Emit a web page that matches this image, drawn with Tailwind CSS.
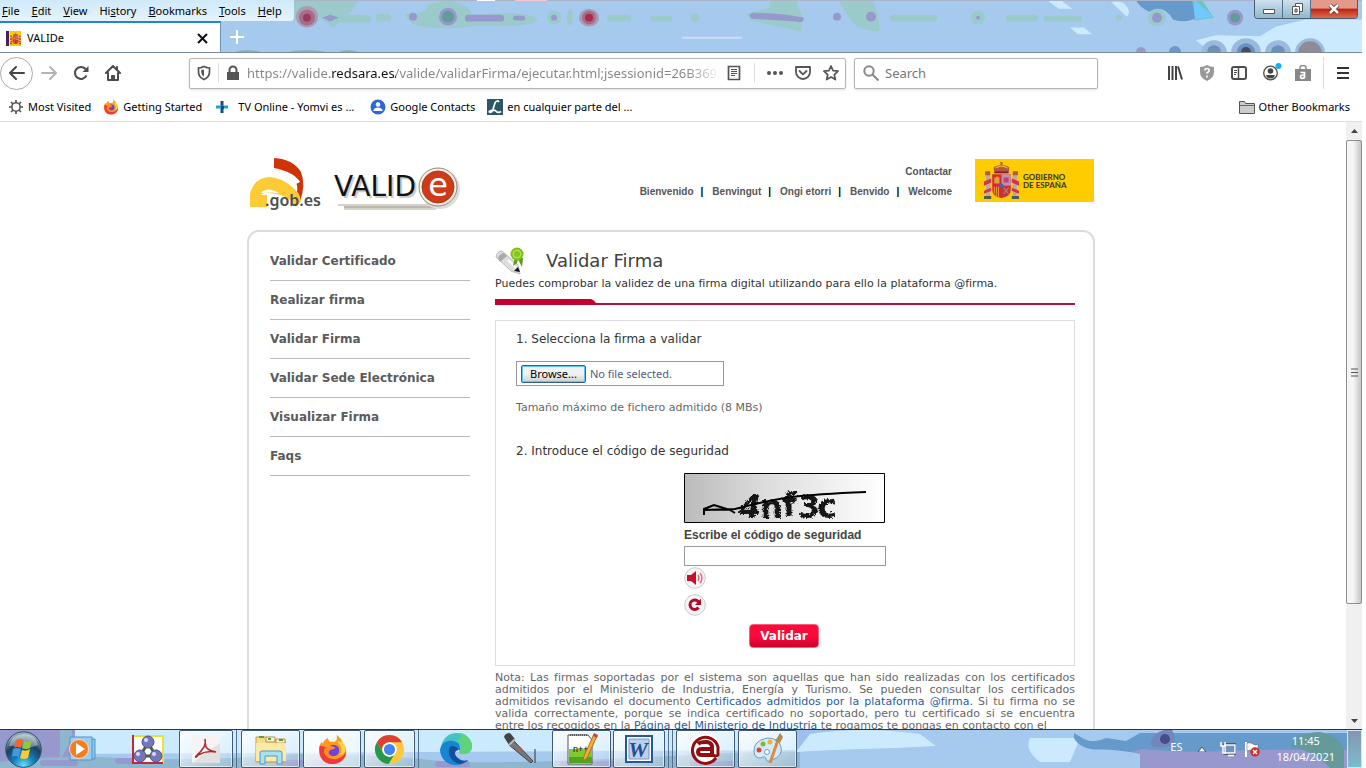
<!DOCTYPE html>
<html lang="es">
<head>
<meta charset="utf-8">
<title>VALIDe</title>
<script src="https://cdn.jsdelivr.net/npm/@tailwindcss/browser@4"></script>
</head>
<body class="h-screen overflow-hidden bg-white pr-1 font-['Noto_Sans',sans-serif] text-[11px] leading-4 text-black">
<svg class="hidden" aria-hidden="true">
  <defs>
    <symbol id="arms" viewBox="0 0 34 36">
      <g fill="#b5583c"><path d="M10 9q-2-4 2-5q5-2 10 0q4 1 2 5z"/><path d="M16 0h2v4h-2z"/></g>
      <path d="M10 9h14v2H10z" fill="#7f1d1d"/><path d="M11 6q6-4 12 0" stroke="#e8b84a" fill="none"/>
      <g fill="#b9a9a4"><path d="M2 12h4v22H2zM28 12h4v22h-4z"/></g>
      <path d="M0 33h7v3H0zM27 33h7v3h-7z" fill="#4d5a57"/>
      <path d="M1 9h5v4H1zM28 9h5v4h-5z" fill="#b5583c"/>
      <path d="M0 19l7-3v4l-7 3zM0 28l7-3v3l-7 3zM34 19l-7-3v4l7 3zM34 28l-7-3v3l7 3z" fill="#d6304a"/>
      <path d="M8 12h18v15q0 7-9 8q-9-1-9-8z" fill="#d6283c"/>
      <path d="M17 12h9v11h-9z" fill="#cc8bb0"/><path d="M19 15h5v5h-5z" fill="#b54a75"/>
      <path d="M10 15h2v-1h2v1h1v6h-5z" fill="#e0a032"/>
      <path d="M10 24v7M12 24v9M14 24v10" stroke="#e0a032"/>
      <path d="M18 24h7v4q-1 4-7 6z" fill="#a9404f"/><path d="M19 25l5 6m0-6l-5 6" stroke="#cc7b50"/>
      <circle cx="17" cy="23" r="2" fill="#4269a5"/>
    </symbol>
    <symbol id="firefox" viewBox="0 0 32 32">
      <path d="M20 1c5 3 6 6 7 9c2 1 4 6 3 11c-1 6-7 10-14 10C8 31 2 25 2 17c0-4 1-7 3-9l1 2c1-3 3-5 5-6l2 4h5c3-1 3-4 2-7z" fill="#ff9a1f"/>
      <path d="M3 12c-2 9 2 19 13 19c8 0 14-6 14-13c-4 9-17 11-22 3c-2-4 0-7 3-7c-4-1-6-2-8-2z" fill="#f5363c"/>
      <path d="M20 1c6 3 8 9 9 15c0-2-1-5-2-6C26 5 23 3 20 1zM21 8c5 5 6 10 2 14c5 0 7-4 6-9c-1-4-4-6-8-5z" fill="#ffd83b"/>
      <circle cx="17" cy="17" r="6" fill="#7542d6"/><path d="M10 13c4-2 6 0 9 1c-2 3-6 1-7 5c0 2 2 4 5 4c-5 1-8-2-8-5z" fill="#ff8c24"/>
    </symbol>
  </defs>
</svg>
<div class="flex h-full flex-col">

<!-- Menu bar and tab strip over the glass frame -->
<header class="relative isolate h-[53px] shrink-0 overflow-hidden border-b border-[#7d8c9c] bg-[#a6c9ee]">
  <svg class="absolute inset-0 -z-10 h-full w-full" viewBox="0 0 1362 53" preserveAspectRatio="none" aria-hidden="true">
    <g fill="#9bcaca">
      <path d="M289 0h70l-8 12l-17 16l-17-12l-10 6l-16-2z"/><path d="M405 14q20 2 24-10l20-4q26 8 22 16q50-6 67 3q-4 10-60 7q-40 6-60 0q-10-2-13-12z"/>
      <rect x="335" y="15" width="36" height="8" rx="4"/><rect x="376" y="14" width="15" height="8" rx="4"/><rect x="607" y="15" width="24" height="7" rx="3"/><rect x="650" y="16" width="22" height="6" rx="3"/><circle cx="554" cy="18" r="7"/><ellipse cx="570" cy="18" rx="3" ry="8"/><circle cx="695" cy="18" r="4"/>
      <path d="M746 14l24-6v-8h26l6 16q0 12-1 16l-50-11z"/><path d="M838 0h34q9 18 7 32q-20 0-29-12z"/><rect x="890" y="15" width="47" height="7" rx="3"/><circle cx="978" cy="18" r="7"/><rect x="1006" y="15" width="32" height="7" rx="3"/><rect x="1044" y="16" width="38" height="6" rx="3"/><circle cx="1119" cy="18" r="3"/>
    </g>
    <g fill="#9799ce"><rect x="465" y="15" width="39" height="7" rx="3"/><rect x="513" y="16" width="12" height="5" rx="2"/><circle cx="413" cy="17" r="4"/><circle cx="448" cy="17" r="9"/><circle cx="554" cy="18" r="3"/><path d="M752 13q30 0 52 5q0 6-8 4l-44-3q-5-3 0-6z"/><circle cx="837" cy="17" r="4"/><circle cx="871" cy="17" r="5"/><circle cx="978" cy="18" r="2"/><path d="M322 18l8-3l9 3l-9 4z"/><path d="M1137 0q8 6 10 0z"/></g>
    <circle cx="448" cy="17" r="6" fill="#639c98"/>
    <circle cx="307" cy="17" r="11" fill="#a99bb5"/><circle cx="307" cy="18" r="8" fill="#a86c87"/><circle cx="307" cy="18" r="4" fill="#963c62"/>
    <ellipse cx="589" cy="18" rx="10" ry="9" fill="#a99bb5"/><circle cx="589" cy="18" r="7" fill="#a86c87"/><circle cx="589" cy="18" r="4" fill="#a82a4c"/>
    <path d="M1048 1h14l10 8h-13zM1070 28h14l8 7h-14zM1111 2q12-2 16 5q4 6 0 10z" fill="#cbeafd"/>
    <path d="M1196 41l20-5l44 1l16-10l30-7h56v33H1210z" fill="#cbeafd"/>
    <path d="M1184 0h18l12 18l-19 3z" fill="#64c8c8"/><path d="M1195 0l18 17l-20 3z" fill="#72c9fb"/><path d="M1136 0h56q2 9 3 19q-12 5-22 1q-9-17-24-8q-10-5-13-12z" fill="#659acb"/>
    <circle cx="1157" cy="18" r="9" fill="#9bcaca"/><circle cx="1157" cy="18" r="5" fill="#9799ce"/>
    <circle cx="1235" cy="18" r="8" fill="#9799ce"/><circle cx="1235" cy="18" r="5" fill="#639c98"/>
    <g fill="#9bb8de"><circle cx="1214" cy="54" r="13"/><circle cx="1246" cy="54" r="15"/><circle cx="1278" cy="54" r="13"/><circle cx="1310" cy="54" r="15"/></g>
    <g fill="#6a91bb"><circle cx="1214" cy="53" r="7"/><circle cx="1246" cy="53" r="9"/><circle cx="1278" cy="53" r="7"/></g><circle cx="1246" cy="53" r="5" fill="#474c60"/><circle cx="1310" cy="54" r="12" fill="#8e8d96"/><circle cx="1141" cy="53" r="5" fill="#9799ce"/><circle cx="1175" cy="53" r="6" fill="#6b9ac8"/>
    <path d="M682 38.500h60" stroke="#cfdcfb" stroke-width="2"/>
    <path d="M0 .5h1362" stroke="#aab4c7"/><path d="M477 .5h18m20 0h32" stroke="#fff"/><path d="M515 .5h32" stroke="#f1c4c8"/>
    <path d="M235 53q12-4 26 0m26 0q20-4 40 0m12 0q8-4 20 0" fill="#86b6b9"/>
  </svg>
  <nav class="flex h-[21px] w-[294px] items-center gap-3 rounded-br bg-linear-to-b from-[#cfe9fa] to-[#e6f3fb] pl-0.5" aria-label="Menu">
    <button><u>F</u>ile</button><button><u>E</u>dit</button><button><u>V</u>iew</button><button>Hi<u>s</u>tory</button><button><u>B</u>ookmarks</button><button><u>T</u>ools</button><button><u>H</u>elp</button>
  </nav>
  <div class="flex h-8">
    <div class="flex w-[221px] items-center border-t-2 border-r border-t-[#1f86c7] border-r-[#6d93b4] bg-white pl-1.5">
      <svg class="mr-1.5 size-[15px]" viewBox="0 0 15 15"><path fill="#fc0" d="M0 0h15v15H0z"/><path fill="#43235f" d="M0 0h3v15H0z"/><path fill="#f7e9a9" d="M3 0h1v15H3z"/><use href="#arms" x="4" y="1" width="11" height="13"/></svg>
      <span class="grow">VALIDe</span>
      <button class="mr-3" aria-label="Close tab"><svg class="size-[11px]" viewBox="0 0 11 11"><path d="M1 1l9 9m0-9l-9 9" stroke="#111" stroke-width="2"/></svg></button>
    </div>
    <button class="ml-2" aria-label="New tab"><svg class="size-4" viewBox="0 0 16 16"><path d="M8 1v14M1 8h14" stroke="#fff" stroke-width="2"/></svg></button>
  </div>
  <div class="absolute top-0 right-1 flex h-[19px] overflow-hidden rounded-b border border-t-0 border-[#4d5e72]">
    <button class="grid w-7 place-items-center border-r border-[#59708a] bg-linear-to-b from-[#cfe0ef] to-[#8eb9cc]" aria-label="Minimize"><svg class="size-[14px]" viewBox="0 0 14 14"><path d="M1.500 7.500h11v4h-11z" fill="#fff" stroke="#555"/></svg></button>
    <button class="grid w-7 place-items-center border-r border-[#59708a] bg-linear-to-b from-[#cfe0ef] to-[#8eb9cc]" aria-label="Restore"><svg class="size-[14px]" viewBox="0 0 14 14"><path d="M5.500 1.500h7v8h-7z" fill="#fff" stroke="#555"/><path d="M2.500 4.500h7v8h-7z" fill="#fff" stroke="#555"/><path d="M5 7h2v3H5z" fill="#b7c8e0" stroke="#555"/></svg></button>
    <button class="grid w-[46px] place-items-center bg-linear-to-b from-[#e49a8a] from-45% via-[#bd1c12] via-50% to-[#e06a4a]" aria-label="Close"><svg class="size-[12px]" viewBox="0 0 12 12"><path d="M2 2l8 8m0-8l-8 8" stroke="#5b3030" stroke-width="4"/><path d="M2 2l8 8m0-8l-8 8" stroke="#fff" stroke-width="2.500"/></svg></button>
  </div>
</header>

<!-- Navigation toolbar -->
<div class="flex h-10 shrink-0 items-center text-[#555]">
  <div class="flex w-[189px] items-center">
    <button class="grid size-[33px] place-items-center rounded-full border border-[#aaa]" aria-label="Back"><svg class="size-4" viewBox="0 0 16 16" fill="none" stroke="#444" stroke-width="2" stroke-linecap="round" stroke-linejoin="round"><path d="M15 8H1m6-6L1 8l6 6"/></svg></button>
    <button class="ml-2" aria-label="Forward"><svg class="size-4" viewBox="0 0 16 16" fill="none" stroke="#b4b4b4" stroke-width="2" stroke-linecap="round" stroke-linejoin="round"><path d="M1 8h14M9 2l6 6l-6 6"/></svg></button>
    <button class="ml-4" aria-label="Reload"><svg class="size-4" viewBox="0 0 16 16"><path d="M13.400 10.500A6 6 0 1 1 12.500 4" fill="none" stroke="#4c4c4c" stroke-width="2"/><path d="M15.500 1v6H9.500z" fill="#4c4c4c"/></svg></button>
    <button class="ml-4" aria-label="Home"><svg class="size-4" viewBox="0 0 16 16" fill="none" stroke="#4c4c4c" stroke-width="2" stroke-linejoin="round" stroke-linecap="round"><path d="M1 8l7-7l7 7M3 8v7h10V8"/><path d="M7 15v-4h2v4M12 2v2"/></svg></button>
  </div>
  <div class="flex h-[31px] w-[657px] items-center rounded-xs border border-[#b5b5b5] bg-white px-1.5 shadow">
    <svg class="size-4 shrink-0" viewBox="0 0 16 16"><path d="M8 1.500q3 1.500 5.500 1.500v4q0 5-5.500 7.500Q2.500 12 2.500 7V3Q5 3 8 1.500z" fill="none" stroke="#555" stroke-width="1.700"/><path d="M8 4.500v7Q5.200 10 5.200 7V5z" fill="#555"/></svg>
    <span class="mx-1.5 h-5 w-px bg-[#ddd]"></span>
    <svg class="size-4 shrink-0" viewBox="0 0 16 16"><path d="M2 7h12v8H2z" fill="#555"/><path d="M4.500 8V5a3.500 3.500 0 0 1 7 0v3" fill="none" stroke="#555" stroke-width="2"/></svg>
    <input aria-label="Address" class="mx-1.5 min-w-0 grow bg-[linear-gradient(90deg,#848484_83px,#111_83px,#111_149px,#848484_149px,#848484_440px,#ffffff_474px)] bg-clip-text font-['Noto_Sans',sans-serif] text-[13px] text-transparent outline-none" value="https://valide.redsara.es/valide/validarFirma/ejecutar.html;jsessionid=26B3695F">
    <button aria-label="Reader view"><svg class="size-4" viewBox="0 0 16 16" fill="none" stroke="#555"><path d="M2.500 1.500h11v13h-11z" stroke-width="1.700"/><path d="M5 4.500h6M5 6.500h6M5 8.500h6M5 10.500h4"/></svg></button>
    <span class="mx-3 h-5 w-px bg-[#ddd]"></span>
    <button aria-label="Page actions"><svg class="size-4" viewBox="0 0 16 16" fill="#555"><circle cx="2" cy="8" r="2"/><circle cx="8" cy="8" r="2"/><circle cx="14" cy="8" r="2"/></svg></button>
    <button class="ml-3" aria-label="Save to Pocket"><svg class="size-4" viewBox="0 0 16 16" fill="none" stroke="#555" stroke-width="1.800" stroke-linejoin="round" stroke-linecap="round"><path d="M1 2h14v5a7 7 0 0 1-14 0z"/><path d="M4.500 6L8 9.300L11.500 6"/></svg></button>
    <button class="ml-3" aria-label="Bookmark"><svg class="size-4" viewBox="0 0 16 16" fill="none" stroke="#555" stroke-width="1.700" stroke-linejoin="round"><path d="M8 1l2.100 4.700l5 .5l-3.800 3.400l1.100 5L8 12l-4.400 2.600l1.100-5L.9 6.200l5-.5z"/></svg></button>
  </div>
  <div class="ml-2 flex h-[31px] w-[244px] items-center rounded-xs border border-[#b5b5b5] bg-white px-2 shadow">
    <svg class="size-4 shrink-0" viewBox="0 0 16 16" fill="none" stroke="#888" stroke-width="2"><circle cx="6" cy="6" r="4.700"/><path d="M9.500 9.500l6 6"/></svg>
    <input aria-label="Search" placeholder="Search" class="ml-1.5 min-w-0 grow text-[13px] outline-none placeholder:text-[#777]">
  </div>
  <div class="ml-auto flex h-full items-center gap-4">
    <button aria-label="Library"><svg class="size-4" viewBox="0 0 16 16" stroke="#444" stroke-width="2"><path d="M2 1v14M5.500 1v14M9 1v14M11 1.500l4 13"/></svg></button>
    <button aria-label="Tracker status"><svg class="size-4" viewBox="0 0 16 16"><path d="M8 0q3 2 7 2v5q0 6-7 9q-7-3-7-9V2q4 0 7-2z" fill="#999"/><path d="M5.800 5.500q.2-2 2.200-2t2.200 1.800q0 1.300-1.200 1.800t-1 1.600M8 10.500v2" fill="none" stroke="#fff" stroke-width="1.700"/></svg></button>
    <button aria-label="Sidebars"><svg class="size-4" viewBox="0 0 16 16" fill="none" stroke="#4c4c4c"><rect x="1" y="2" width="14" height="12" rx="2" stroke-width="2"/><path d="M7.500 2v12" stroke-width="1.500"/><path d="M3 5.500h3M3 7.500h3M3 9.500h2"/></svg></button>
    <button aria-label="Account"><svg class="size-4 overflow-visible" viewBox="0 0 16 16"><circle cx="7.500" cy="8" r="6.800" fill="none" stroke="#4c4c4c" stroke-width="1.300"/><circle cx="7.500" cy="6" r="2.800" fill="#444"/><path d="M3 10h9q-1 3.500-4.500 3.500T3 10z" fill="#444"/><circle cx="15.500" cy="1" r="3" fill="#14aef2"/></svg></button>
    <button aria-label="Addon"><svg class="size-4" viewBox="0 0 16 16"><path d="M0 4h16v12H0z" fill="#888"/><path d="M5 5V2.500q0-2 3-2t3 2V5" fill="none" stroke="#888" stroke-width="1.500"/><path d="M5.500 7.500h4v6m0-3.500h-2q-2 0-2 1.700T7.200 13.300q2.300 0 2.300-2" fill="none" stroke="#fff" stroke-width="1.700"/></svg></button>
    <span class="-mx-1 h-8 w-px bg-[#ddd]"></span>
    <button class="mr-3" aria-label="Open menu"><svg class="size-[14px]" viewBox="0 0 14 14" stroke="#333" stroke-width="2"><path d="M1 2h12M1 7h12M1 12h12"/></svg></button>
  </div>
</div>

<!-- Bookmarks -->
<nav class="flex h-[29px] shrink-0 items-center gap-3 border-b border-[#ddd] px-2" aria-label="Bookmarks">
  <a href="#" class="flex items-center gap-1"><svg class="size-4" viewBox="0 0 16 16" fill="none" stroke="#555"><circle cx="8" cy="8" r="4.200" stroke-width="1.600"/><path d="M8 1v2.500M8 12.500V15M1 8h2.500M12.500 8H15M3 3l2 2M11 11l2 2M13 3l-2 2M5 11l-2 2" stroke-width="1.700"/></svg>Most Visited</a>
  <a href="#" class="flex items-center gap-1"><svg class="size-4"><use href="#firefox"/></svg>Getting Started</a>
  <a href="#" class="flex items-center gap-2"><svg class="size-4" viewBox="0 0 16 16"><path d="M8 2v12" stroke="#164e83" stroke-width="3"/><path d="M2 8h12" stroke="#20a3d0" stroke-width="3"/><path d="M7 7h3v3H7z" fill="#164e83"/></svg>TV Online - Yomvi es ...</a>
  <a href="#" class="ml-1 flex items-center gap-1"><svg class="size-4" viewBox="0 0 16 16"><circle cx="8" cy="8" r="7.500" fill="#2b67dd"/><circle cx="8" cy="5.500" r="2.300" fill="#fff"/><path d="M3.500 11q1-2.500 4.500-2.500t4.500 2.500v1h-9z" fill="#fff"/></svg>Google Contacts</a>
  <a href="#" class="flex items-center gap-1"><svg class="size-4" viewBox="0 0 16 16"><path d="M0 0h16v16H0z" fill="#2b5866"/><path d="M12 3q-2-2.500-4 1q-1 3-2 6.500q-1 3-3 3q-2-1 1-2q4-1 6 1.500q2 1 4-.5" fill="none" stroke="#fff" stroke-width="1.700"/></svg>en cualquier parte del ...</a>
  <a href="#" class="mr-1 ml-auto flex items-center gap-1"><svg class="size-4" viewBox="0 0 16 16"><path d="M.5 14.500v-12h5l1 2h9v10z" fill="#ccc" stroke="#555"/><path d="M.5 6.500h15" stroke="#666"/></svg>Other Bookmarks</a>
</nav>

<!-- Page -->
<div class="flex min-h-0 grow">
  <main class="h-full min-w-0 grow overflow-hidden bg-white pr-1 font-['DejaVu_Sans',sans-serif]">
    <div class="mx-auto w-full max-w-[848px]">
      <div class="flex items-start pt-9 pl-[3px]">
        <svg class="h-[54px] w-[72px]" viewBox="0 0 72 54" role="img" aria-label=".gob.es">
          <path d="M24 0q19 1 27 14q5 12-1 30q-4 4-5 2q4-17 1-21Q38 14 24 11z" fill="#cf3408"/>
          <path d="M24 11q13 3 22 15l4-2q-6-10-26-14z" fill="#fff"/>
          <path d="M0 49V36Q4 20 19 19q17 1 30 17l2 7l-5 6Q40 37 20 35q-6-1-9 2h6v12z" fill="#fdcb35"/>
          <path d="M11 35q6-7 18 0q-10-1-18 0z" fill="#fff"/>
          <text x="15" y="48" font-family="Noto Sans, sans-serif" font-size="16" font-weight="600" fill="#4d4d4d">.gob.es</text>
        </svg>
        <svg class="mt-1 ml-3 h-[52px] w-[126px]" viewBox="0 0 126 52" role="img" aria-label="VALIDe">
          <g font-family="DejaVu Sans, sans-serif" font-size="28"><text x="2" y="36" fill="#ccc">VALID</text><text x="0" y="34" fill="#111">VALID</text></g>
          <path d="M4 43h92M10 47h92" stroke="#c9c4b4" stroke-width="1.500"/><path d="M10 45h92" stroke="#7d7364"/>
          <circle cx="106" cy="27" r="20" fill="#ddd"/><circle cx="104" cy="25" r="19" fill="#f6f2ea" stroke="#9b8170"/><circle cx="104" cy="25" r="16" fill="#cf3a17" stroke="#a83a20"/>
          <text x="104" y="34" text-anchor="middle" font-family="DejaVu Sans, sans-serif" font-size="32" fill="#fff">e</text>
        </svg>
        <div class="mt-1.5 ml-auto flex flex-col items-end gap-1 font-['Liberation_Sans',sans-serif] text-[10px] font-bold text-[#555]">
          <a href="#">Contactar</a>
          <div class="flex gap-[7px]"><a href="#">Bienvenido</a><span class="mr-0.5 text-black">|</span><a href="#">Benvingut</a><span class="mr-0.5 text-black">|</span><a href="#">Ongi etorri</a><span class="mr-0.5 text-black">|</span><a href="#">Benvido</a><span class="mr-0.5 text-black">|</span><a href="#">Welcome</a></div>
        </div>
        <div class="mt-px mr-px ml-[23px] flex h-[43px] w-[119px] items-center gap-1 bg-[#fc0] pl-[9px] font-['Lato',sans-serif] text-[8px] leading-2 font-bold text-[#333]">
          <svg class="h-[37px] w-[35px]"><use href="#arms"/></svg><span>GOBIERNO<br>DE ESPAÑA</span>
        </div>
      </div>
      <div class="mt-4 flex h-[600px] rounded-t-xl border-2 border-[#dcdcdc] px-[21px] pt-[9px]">
        <nav class="w-[200px] shrink-0 text-[12px] font-bold text-[#5b5b5b]" aria-label="Principal">
          <a href="#" class="block h-10 border-b border-[#bbb] pt-3">Validar Certificado</a>
          <a href="#" class="block h-[39px] border-b border-[#bbb] pt-[11px]">Realizar firma</a>
          <a href="#" class="block h-[39px] border-b border-[#bbb] pt-[11px]">Validar Firma</a>
          <a href="#" class="block h-[39px] border-b border-[#bbb] pt-[11px]">Validar Sede Electrónica</a>
          <a href="#" class="block h-[39px] border-b border-[#bbb] pt-[11px]">Visualizar Firma</a>
          <a href="#" class="block h-[39px] border-b border-[#bbb] pt-[11px]">Faqs</a>
        </nav>
        <section class="ml-[25px] w-[580px] shrink-0 text-[#333]">
          <div class="flex h-8 items-center pt-2">
            <svg class="h-7 w-8" viewBox="0 0 32 28"><path d="M1 10q1-6 6-6l16 14l2 9l-9-3z" fill="#dedede" stroke="#bbb"/><path d="M3 11q2-5 6-5l3 3l-7 6z" fill="#aaa"/><path d="M13 13l8 8" stroke="#fff" stroke-width="2"/><path d="M25 25l-6-1l4-4z" fill="#111"/><path d="M20 10l-2 9l4-3l1-4l4 8l1-9z" fill="#569a1b"/><circle cx="22" cy="7" r="6.500" fill="#7ebf16"/><circle cx="22" cy="7" r="4.500" fill="#b2de48"/><circle cx="22" cy="7" r="3" fill="#83c41d"/></svg>
            <h1 class="ml-[19px] text-[18px] leading-6 text-[#404040]">Validar Firma</h1>
          </div>
          <p class="pt-[3px] text-[11px]">Puedes comprobar la validez de una firma digital utilizando para ello la plataforma @firma.</p>
          <svg class="mt-[7px] h-1.5 w-full" aria-hidden="true"><path d="M0 4h580v2H0z" fill="#b01238"/><path d="M0 0h96q3 1 5 4v2H0z" fill="#c3002f"/></svg>
          <form class="mt-[15px] h-[346px] border border-[#ddd] px-5 pt-2.5">
            <p class="text-[12px]">1. Selecciona la firma a validar</p>
            <div class="mt-3.5 flex h-[25px] w-[208px] items-center border border-[#999] pl-1 font-['Noto_Sans',sans-serif] text-[11px]">
              <input id="firma" type="file" class="sr-only">
              <label for="firma" class="rounded-xs border border-[#2d628c] bg-linear-to-b from-[#f2f2f2] from-50% to-[#cfcfcf] px-2 text-black inset-ring inset-ring-[#5fc6f5]">Browse...</label>
              <span class="ml-1 text-[#4f5b80]">No file selected.</span>
            </div>
            <p class="mt-3.5 text-[11px] text-[#666]">Tamaño máximo de fichero admitido (8 MBs)</p>
            <p class="mt-[27px] text-[12px]">2. Introduce el código de seguridad</p>
            <div class="mt-3.5 ml-[168px] flex w-[202px] flex-col items-start">
              <svg class="h-[50px] w-[201px]" viewBox="0 0 201 50" role="img" aria-label="Captcha">
                <defs><linearGradient id="cg"><stop stop-color="#bbb"/><stop offset=".4" stop-color="#dcdcdc"/><stop offset="1" stop-color="#fff"/></linearGradient>
                <filter id="rough"><feTurbulence baseFrequency=".35" numOctaves="2" seed="4"/><feDisplacementMap in="SourceGraphic" scale="4"/></filter></defs>
                <path d="M.5 .5h200v49H.5z" fill="url(#cg)" stroke="#000"/>
                <g filter="url(#rough)" font-family="DejaVu Sans, sans-serif" font-weight="bold" fill="#151515"><text x="54" y="44" font-size="32" font-style="italic">4</text><text x="75" y="44" font-size="32">n</text><text x="97" y="43" font-size="34">f</text><text x="113" y="44" font-size="32">3</text><text x="132" y="44" font-size="34">c</text></g>
                <path d="M20 42v-6l10-4l16 5l5 3M20 37l31-1q34-9 57-12t74-5" fill="none" stroke="#000" stroke-width="2"/>
              </svg>
              <label for="codigo" class="mt-1 font-['Liberation_Sans',sans-serif] text-[12px] font-bold text-[#444]">Escribe el código de seguridad</label>
              <input id="codigo" type="text" class="mt-[3px] h-5 w-full border border-[#999] bg-white px-1">
              <button type="button" class="mt-px" aria-label="Escuchar código"><svg class="size-[22px]" viewBox="0 0 22 22"><circle cx="11" cy="11" r="10.300" fill="#f4f4f4" stroke="#ccc"/><path d="M3 8h4l5-4v14l-5-4H3z" fill="#c8102e"/><path d="M14 8q2 3 0 6M16 6q4 5 0 10" fill="none" stroke="#d86a7c" stroke-width="1.400"/></svg></button>
              <button type="button" class="mt-[5px]" aria-label="Recargar código"><svg class="size-[22px]" viewBox="0 0 22 22"><circle cx="11" cy="11" r="10.300" fill="#f4f4f4" stroke="#ccc"/><path d="M14.500 13.500A4.700 4.700 0 1 1 14.500 8" fill="none" stroke="#b30a2c" stroke-width="3"/><path d="M17 4.500v6.500h-6z" fill="#b30a2c"/></svg></button>
            </div>
            <button type="button" class="mt-2 ml-[233px] block h-6 w-[70px] rounded border border-[#fa5c7c] bg-linear-to-b from-[#fb0b39] from-50% to-[#cc0231] text-[12px] font-bold text-white">Validar</button>
          </form>
          <p class="mt-1.5 text-justify text-[11px] leading-3 text-[#666]">Nota: Las firmas soportadas por el sistema son aquellas que han sido realizadas con los certificados admitidos por el Ministerio de Industria, Energía y Turismo. Se pueden consultar los certificados admitidos revisando el documento <a href="#" class="text-[#2c5a9a]">Certificados admitidos por la plataforma @firma.</a> Si tu firma no se valida correctamente, porque se indica certificado no soportado, pero tu certificado si se encuentra entre los recogidos en la <a href="#" class="text-[#2c5a9a]">Página del Ministerio de Industria</a> te rogamos te pongas en contacto con el</p>
        </section>
      </div>
    </div>
  </main>
  <div class="flex w-4 shrink-0 flex-col bg-[#f0f0f0]" aria-hidden="true">
    <div class="grid h-[18px] place-items-center"><svg class="h-1 w-[7px]" viewBox="0 0 7 4"><path d="M0 4l3.500-4L7 4z" fill="#444"/></svg></div>
    <div class="grid h-[464px] place-items-center rounded-xs border border-[#8f8f8f] bg-linear-to-r from-[#f5f5f5] from-45% to-[#c6c6c6]"><svg class="h-[9px] w-[7px]" viewBox="0 0 7 9"><path d="M0 1h7M0 4.500h7M0 8h7" stroke="#555"/></svg></div>
    <div class="mt-auto grid h-[17px] place-items-center"><svg class="h-1 w-[7px]" viewBox="0 0 7 4"><path d="M0 0l3.500 4L7 0z" fill="#444"/></svg></div>
  </div>
</div>

<!-- Taskbar -->
<footer class="relative isolate flex h-[39px] shrink-0 items-stretch overflow-hidden border-t border-[#27364a] bg-[#a6c9ee]">
  <svg class="absolute inset-0 -z-10 h-full w-full" viewBox="0 0 1362 38" preserveAspectRatio="none" aria-hidden="true">
    <path d="M60 0h780l-30 4H980l40 5h60v29H60z" fill="#a6c9ee"/><path d="M70 0h740v20L60 24z" fill="#cbeafd"/>
    <path d="M0 0h75v20l-15 18H0z" fill="#9799ce"/><path d="M60 0h12v8l-12 22zM0 32q60-8 120-4t180-4q80 0 130 6t240-4t140 4v8H0z" fill="#8fb6cf"/>
    <g fill="#9799ce"><rect x="40" y="30" width="38" height="6" rx="3"/><rect x="115" y="28" width="30" height="6" rx="3"/><rect x="280" y="30" width="50" height="6" rx="3"/><rect x="435" y="31" width="35" height="6" rx="3"/><rect x="560" y="31" width="60" height="5" rx="2"/><rect x="690" y="31" width="44" height="5" rx="2"/></g>
    <path d="M796 0h74l-8 14l-66 6z" fill="#9fc0ea"/>
    <path d="M810 4q50-8 110 0l16 12l-60 3l-80 3z" fill="#cbeafd"/><path d="M800 22q80-6 140-2t134-3v21H800z" fill="#a6c9ee"/><path d="M1030 8h50l-10 24h-30q-16-12-10-24z" fill="#cbeafd"/>
    <path d="M1074 3l10 6q10 5 22-1l20 3l14-8h222v35h-150q-60-14-110-18q-22 0-28-12z" fill="#659acb"/>
    <path d="M1074 32q14-12 34-10t34-3q40 4 80 2t140-1v18H1074z" fill="#9799ce"/><path d="M1074 22q30-6 66 2v14h-66z" fill="#a6c9ee"/>
    <path d="M1150 14q4-12 14-14h8q6 10-2 16q-14 4-20-2z" fill="#7486bd"/><circle cx="1165" cy="9" r="5" fill="#454f87"/>
    <path d="M1290 16q8-14 30-14q20 4 24 18v18h-14q-14-16-40-22z" fill="#659a9b"/>
  </svg>
  <button class="grid w-[46px] place-items-center" aria-label="Start"><svg class="size-[37px]" viewBox="0 0 37 37"><defs><radialGradient id="orb" cy=".95" r=".85"><stop stop-color="#5fe3fb"/><stop offset=".35" stop-color="#157fbf"/><stop offset=".7" stop-color="#1c3f5c"/><stop offset="1" stop-color="#8fa9b9"/></radialGradient></defs><circle cx="18.500" cy="18.500" r="17.800" fill="url(#orb)" stroke="#35556b"/><path d="M4 15q3-11 14.500-12T33 14q-10 4-14 2T4 15z" fill="#fff" opacity=".35"/><path d="M11 9q4-2 7 0l-2 8q-4-2-7 0z" fill="#f2652c"/><path d="M19 10q4 2 8-1l-2 8q-4 2-8 0z" fill="#93c83e"/><path d="M8 18q4-2 8 0l-2 8q-4-2-7 0z" fill="#3f9bdc"/><path d="M17 19q4 2 8-1l-2 9q-4 2-8 0z" fill="#fdca35"/></svg></button>
  <button class="grid w-[72px] place-items-center" aria-label="Media player"><svg class="h-[26px] w-7" viewBox="0 0 28 26"><path d="M5 3h22v20H5z" fill="#8dc6ec" stroke="#4d94c8"/><path d="M2 1h22v23H2z" fill="#9acdf0" stroke="#4d94c8"/><circle cx="11" cy="13" r="9.500" fill="#f07f22" stroke="#fbdcb6"/><path d="M8 7l9 6l-9 6z" fill="#fff"/></svg></button>
  <button class="grid w-[60px] place-items-center" aria-label="Molecules"><svg class="h-[29px] w-8" viewBox="0 0 32 29"><path d="M1 1h30v27H1z" fill="#fff" stroke="#e9e432" stroke-width="2"/><path d="M1 0v28h30" fill="none" stroke="#c92337" stroke-width="2"/><path d="M16 8L8 21h16z" fill="none" stroke="#526330" stroke-width="3"/><g fill="#7576b8" stroke="#4f5091"><circle cx="16" cy="7" r="6"/><circle cx="8" cy="21" r="6"/><circle cx="24" cy="21" r="6"/></g><g fill="#dcdcf7"><circle cx="14" cy="5" r="2"/><circle cx="6" cy="19" r="2"/><circle cx="22" cy="19" r="2"/></g></svg></button>
  <button class="ml-px grid w-[54px] place-items-center rounded-xs border border-[#3f5a78] bg-linear-to-br from-white/90 to-white/10 inset-ring inset-ring-white/60" aria-label="Adobe Reader"><svg class="size-7" viewBox="0 0 28 28"><path d="M0 0h28v28H0z" fill="#f4f4f4"/><path d="M0 28L28 8v20z" fill="#e0e0e0"/><path d="M13 4q0 4 1 8q3 4 10 5q-9-2-18 3q-3 4-2 1q5-4 8-9q2-5 1-8z" fill="none" stroke="#b3282c" stroke-width="1.500"/></svg></button>
  <span class="mr-1 w-1 border-r border-[#56708e]"></span>
  <button class="grid w-[59px] place-items-center rounded-xs border border-[#3f5a78] bg-linear-to-br from-white/90 to-white/10 inset-ring inset-ring-white/60" aria-label="Explorer"><svg class="h-[31px] w-[34px]" viewBox="0 0 34 31"><path d="M2 3h10l2 3h17v22H2z" fill="#f4dc8c" stroke="#c99a3b"/><path d="M12 3h9v5h-9zM22 5h9v4h-9z" fill="#f9f3df" stroke="#b98c3e"/><path d="M5 2h5v2H5zM14 4h3v2h-3zM25 5h4v2h-4z" fill="#5a9c46"/><path d="M2 9h30v18H2z" fill="#fbe9a4"/><path d="M6 30V19q0-2 2-2h18q2 0 2 2v11h-5v-8H11v8z" fill="#a7dff3" stroke="#4a9cc9"/></svg></button>
  <button class="ml-[3px] grid w-[58px] place-items-center rounded-xs border border-[#3f5a78] bg-linear-to-br from-white to-white/50 inset-ring inset-ring-white/60" aria-label="Firefox"><svg class="size-[31px]"><use href="#firefox"/></svg></button>
  <button class="ml-[3px] grid w-[51px] place-items-center rounded-xs border border-[#3f5a78] bg-linear-to-br from-white/90 to-white/10 inset-ring inset-ring-white/60" aria-label="Chrome"><svg class="size-[31px]" viewBox="0 0 32 32"><circle cx="16" cy="16" r="15" fill="#fdc93c"/><path d="M3 8.500A15 15 0 0 1 29 8.500H16a7.500 7.500 0 0 0-6.500 11z" fill="#dd4031"/><path d="M3 8.500l6.500 11L16 24l6-4.500L15 31A15 15 0 0 1 3 8.500z" fill="#22994e"/><circle cx="16" cy="16" r="7.500" fill="#fff"/><circle cx="16" cy="16" r="5.700" fill="#4285f0"/></svg></button>
  <span class="w-1 border-r border-[#56708e]"></span>
  <button class="grid w-[74px] place-items-center" aria-label="Edge"><svg class="size-8" viewBox="0 0 32 32"><path d="M1 15C2 6 8 0 17 0c8 0 15 6 15 13c0 6-4 8-9 8c-4 0-5-2-3-4c2-5-2-8-7-8C7 9 3 12 1 15z" fill="#44c3c4"/><path d="M20 0c7 1 12 7 12 13c0 6-4 8-9 8c-4 0-5-2-3-4c4-5-1-8-5-8c4-2 7-4 5-9z" fill="#5ed27c"/><path d="M0 17C1 9 8 7 13 8c6 1 8 5 7 9c-7-3-9 3-5 9q6 6 13 1C20 36 1 33 0 17z" fill="#1686d2"/><path d="M10 14c-3 6 0 15 10 17c5-1 7-3 8-4q-6 2-10-2c-5-4-3-8 1-8c-3-4-7-5-9-3z" fill="#144f9c"/></svg></button>
  <button class="ml-0.5 grid w-[50px] place-items-center" aria-label="Microphone"><svg class="size-8" viewBox="0 0 32 32"><path d="M9 7L29 28l-2 2L5 12z" fill="#777" stroke="#444"/><path d="M0 4q1-4 6-4l5 6l-6 6z" fill="#444"/><path d="M5 12l6-6" stroke="#bbb" stroke-width="2"/><path d="M15 14l3 3" stroke="#e54b39" stroke-width="2"/><path d="M31 16v14" stroke="#333"/></svg></button>
  <button class="ml-[7px] grid w-[59px] place-items-center rounded-xs border border-[#3f5a78] bg-linear-to-br from-white/90 to-white/10 inset-ring inset-ring-white/60" aria-label="Notepad++"><svg class="size-8" viewBox="0 0 32 32"><path d="M2 2h20l4 5v24H2z" fill="#fff" stroke="#555"/><path d="M3 16h23v14H3z" fill="#7ecb2f"/><path d="M3 24h23v6H3z" fill="#50a51e"/><path d="M4 2h18" stroke="#555" stroke-width="2" stroke-dasharray="1 1"/><text x="7" y="19" font-family="Liberation Sans" font-size="9">n++</text><path d="M28 1l3 2L21 25l-4 3l1-5z" fill="#f2b035" stroke="#b66b1f"/><path d="M28 0l4 2l-1 3l-4-2z" fill="#c84738"/></svg></button>
  <button class="ml-0.5 grid w-[52px] place-items-center rounded-xs border border-[#3f5a78] bg-linear-to-br from-white/90 to-white/10 inset-ring inset-ring-white/60" aria-label="Word"><svg class="size-7" viewBox="0 0 28 28"><path d="M1 1h26v26H1z" fill="#fff" stroke="#2a5699" stroke-width="2"/><path d="M4 4h20v20H4z" fill="#bcd0ea" stroke="#7397c8"/><text x="13" y="22" text-anchor="middle" font-family="Liberation Serif" font-size="22" font-weight="bold" font-style="italic" fill="#234d93">W</text></svg></button>
  <span class="w-1 border-r border-[#56708e]"></span>
  <span class="mr-[3px] w-1 border-r border-[#56708e]"></span>
  <button class="grid w-[59px] place-items-center rounded-xs border border-[#3f5a78] bg-linear-to-br from-white/90 to-white/10 inset-ring inset-ring-white/60" aria-label="Autofirma"><svg class="size-[31px]" viewBox="0 0 31 31"><circle cx="15.500" cy="15" r="15" fill="#fff"/><path d="M26 24A13 13 0 1 1 28 13v8q-2 2-5 0" fill="none" stroke="#8f0f12" stroke-width="3"/><path d="M8 10q2-2 7.500-2T22 12v9H12q-4 0-4-3t4-3h9" fill="none" stroke="#8f0f12" stroke-width="4"/></svg></button>
  <button class="ml-[3px] grid w-[59px] place-items-center rounded-xs border border-[#3f5a78] bg-linear-to-br from-white/90 to-white/10 inset-ring inset-ring-white/60" aria-label="Paint"><svg class="size-8" viewBox="0 0 32 32"><path d="M2 19Q1 8 15 5q12 0 14 9t-9 13q-5 3-6-1q-1-4-5-1q-6 1-7-6z" fill="#d5eaf8" stroke="#689cc4"/><circle cx="7" cy="17" r="2.500" fill="#df4431"/><circle cx="11" cy="11" r="2.500" fill="#83b735"/><circle cx="18" cy="9" r="2.500" fill="#f0b134"/><circle cx="15" cy="19" r="2.500" fill="#fff" stroke="#689cc4"/><path d="M26 7L18 30" stroke="#dd8a3d" stroke-width="3"/><path d="M23 8l5-8l3 4l-3 6z" fill="#b28a5c"/></svg></button>
  <div class="ml-auto flex items-center text-white">
    <span class="-mt-1">ES</span>
    <svg class="ml-4 h-[5px] w-2" viewBox="0 0 8 5"><path d="M0 5l4-5l4 5z" fill="#fff" stroke="#456"/></svg>
    <svg class="ml-3.5 size-4" viewBox="0 0 16 16"><path d="M5 4h10v8H5z" fill="#6f93bd" stroke="#222" stroke-width="3"/><path d="M5 4h10v8H5z" fill="#6f93bd" stroke="#fff" stroke-width="1.500"/><path d="M8 14.500h6" stroke="#fff" stroke-width="1.500"/><path d="M1 1v4h4V1M3 5v7h3" fill="none" stroke="#fff" stroke-width="1.500"/></svg>
    <svg class="ml-2 size-4" viewBox="0 0 16 16"><path d="M2 1v15" stroke="#fff" stroke-width="2"/><path d="M3 2q3-1 6 1t5 0v7q-3 2-5 0t-6 0z" fill="#fff" stroke="#555" stroke-width=".5"/><circle cx="11" cy="11" r="4.700" fill="#d42c26"/><path d="M9 9l4 4m0-4l-4 4" stroke="#fff" stroke-width="1.500"/></svg>
    <div class="mr-3 ml-4 text-center">11:45<br>18/04/2021</div>
  </div>
  <button class="w-[15px] border border-[#cfe6ff] bg-linear-to-b from-[#8397ae] to-[#79bcd0]" aria-label="Show desktop"></button>
</footer>
</div>
</body>
</html>
